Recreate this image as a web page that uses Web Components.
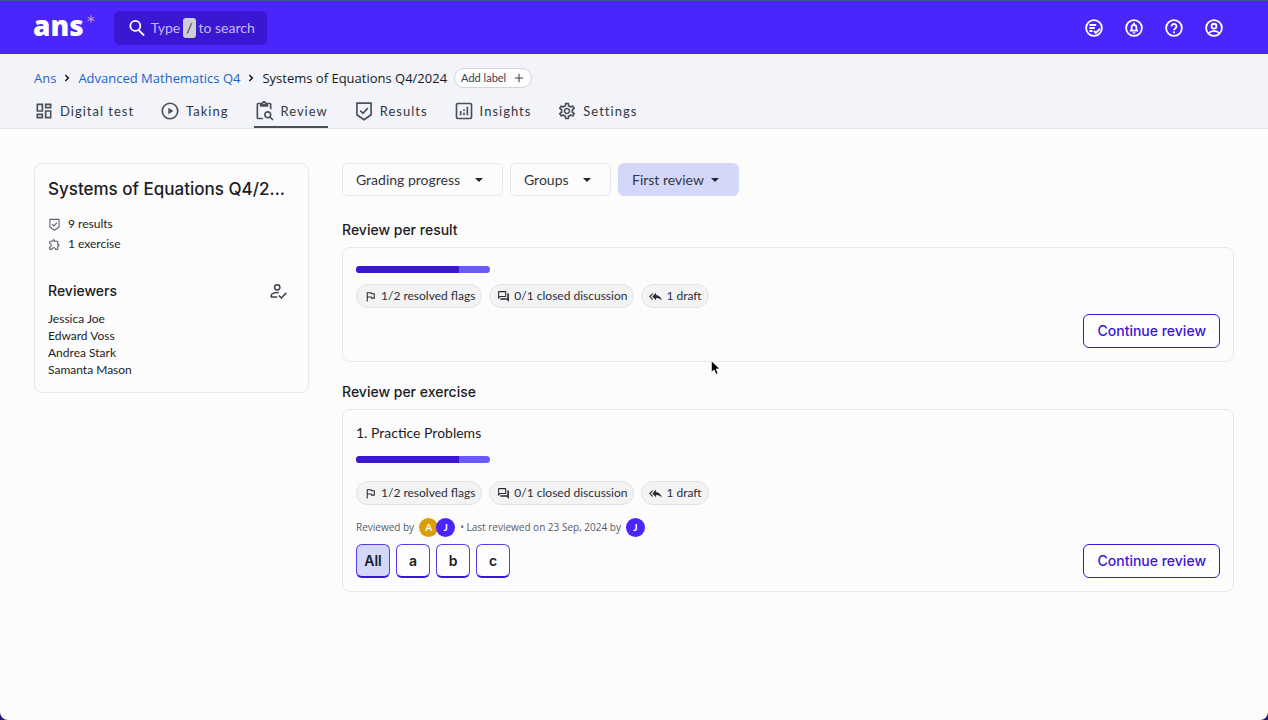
<!DOCTYPE html>
<html lang="en">
<head>
<meta charset="utf-8">
<meta name="viewport" content="width=device-width, initial-scale=1">
<title>Systems of Equations Q4/2024</title>
<style>
  :root {
    --text-font: Lato, "Open Sans", sans-serif;
    --wide-font: "Open Sans", Lato, sans-serif;
    --head-font: Inter, "Open Sans", sans-serif;
    --brand: #4a26fd;
    --brand-dark: #3b17d4;
    --tint: #d3d8fb;
    --line: #e7e7ea;
    --ink: #1b1d24;
    --soft: #3c4049;
  }
  html { background: #26127a; }
  body {
    margin: 0;
    font: 12px/20px var(--text-font);
    color: var(--ink);
  }
</style>
</head>
<body>
<ans-app></ans-app>

<script>
const ICONS = {
  search: '<path fill="none" stroke="currentColor" stroke-width="2.2" d="M14 14.500L20.500 21M16 9.500a6 6 0 1 1-12 0 6 6 0 0 1 12 0z"/>',
  star: '<path fill="none" stroke="currentColor" stroke-width="3" d="M12 1v22M2 7l20 10M22 7L2 17"/>',
  todo: '<g fill="none" stroke="currentColor" stroke-width="2.400"><circle cx="12" cy="12" r="10.5"/><path d="M6 8h9M6 12h7M6 16h4M12 16l2.500 2.500 5.500-5.500"/></g>',
  bell: '<g fill="none" stroke="currentColor" stroke-width="2.400"><circle cx="12" cy="12" r="10.5"/><path d="M6.500 15.500h11M8.800 15.500V11a3.2 3.2 0 0 1 6.4 0v4.500M12 5v3"/></g><path d="M10 17.500h4a2 2 0 0 1-4 0z"/>',
  help: '<g fill="none" stroke="currentColor" stroke-width="2.400"><circle cx="12" cy="12" r="10.5"/><path d="M8.800 9.800a3.200 3.200 0 1 1 5.200 2.400c-1.300 1-2 1.500-2 2.800"/></g><path d="M10.800 16.500h2.400v2.400h-2.400z"/>',
  user: '<g fill="none" stroke="currentColor" stroke-width="2.400"><circle cx="12" cy="12" r="10.5"/><circle cx="12" cy="9.500" r="3.200"/><path d="M4.800 19a10 10 0 0 1 14.400 0"/></g>',
  chevron: '<path fill="none" stroke="currentColor" stroke-width="4.500" d="M7 3l9 9-9 9"/>',
  plus: '<path fill="none" stroke="currentColor" stroke-width="2.500" d="M12 2v20M2 12h20"/>',
  grid: '<path d="M19 5v2h-4V5h4M9 5v6H5V5h4m10 8v6h-4v-6h4M9 17v2H5v-2h4M21 3h-8v6h8V3zM11 3H3v10h8V3zm10 8h-8v10h8V11zm-10 4H3v6h8v-6z"/>',
  play: '<path d="M10 16l6-4-6-4v8z"/><circle cx="12" cy="12" r="9.300" fill="none" stroke="currentColor" stroke-width="2"/>',
  paste: '<path fill-rule="evenodd" d="M20.3 18.900c.4-.7.7-1.500.7-2.400 0-2.500-2-4.500-4.500-4.500S12 14 12 16.500s2 4.500 4.500 4.500c.9 0 1.700-.3 2.400-.7l3.200 3.200 1.400-1.400-3.200-3.200zm-3.800.1c-1.400 0-2.500-1.100-2.500-2.500s1.100-2.500 2.500-2.500 2.500 1.100 2.500 2.500-1.100 2.500-2.500 2.500zM5 20V4h2v3h10V4h2v5.200c.7.4 1.400.8 2 1.300V4c0-1.100-.9-2-2-2h-4.180C14.400.84 13.300 0 12 0S9.600.84 9.180 2H5c-1.100 0-2 .9-2 2v16c0 1.100.9 2 2 2h6.500c-.6-.6-1.100-1.300-1.300-2H5zM12 2a1 1 0 1 1 0 2 1 1 0 0 1 0-2z"/>',
  shield: '<g fill="none" stroke="currentColor" stroke-width="2"><path stroke-linejoin="round" d="M3.500 2.500h17v14L12 22.500l-8.500-6z"/><path d="M7.500 11.500l3.200 3.200 6-6.200"/></g>',
  chart: '<g fill="none" stroke="currentColor" stroke-width="2"><rect x="3" y="3" width="18" height="18" rx="1.500"/><path d="M8 17v-5M12 17v-3M12 12v-2M16 17V7"/></g>',
  gear: '<path d="M19.430 12.980c.04-.32.07-.64.07-.98 0-.34-.03-.66-.07-.98l2.110-1.650c.19-.15.24-.42.12-.64l-2-3.460c-.09-.16-.26-.25-.44-.25-.06 0-.12.01-.17.03l-2.490 1c-.52-.4-1.080-.73-1.690-.98l-.38-2.650C14.460 2.180 14.250 2 14 2h-4c-.25 0-.46.18-.49.42l-.38 2.650c-.61.25-1.170.59-1.690.98l-2.490-1c-.06-.02-.12-.03-.18-.03-.17 0-.34.09-.43.25l-2 3.460c-.13.22-.07.49.12.64l2.110 1.650c-.04.32-.07.65-.07.98 0 .33.03.66.07.98l-2.110 1.650c-.19.15-.24.42-.12.64l2 3.460c.09.16.26.25.44.25.06 0 .12-.01.17-.03l2.490-1c.52.4 1.080.73 1.690.98l.38 2.650c.03.24.24.42.49.42h4c.25 0 .46-.18.49-.42l.38-2.650c.61-.25 1.170-.59 1.690-.98l2.490 1c.06.02.12.03.18.03.17 0 .34-.09.43-.25l2-3.460c.12-.22.07-.49-.12-.64l-2.110-1.650zm-1.980-1.710c.04.31.05.52.05.73 0 .21-.02.43-.05.73l-.14 1.130.89.7 1.080.84-.7 1.210-1.270-.51-1.040-.42-.9.68c-.43.32-.84.56-1.250.73l-1.060.43-.16 1.130-.2 1.350h-1.400l-.19-1.350-.16-1.130-1.060-.43c-.43-.18-.83-.41-1.230-.71l-.91-.7-1.060.43-1.270.51-.7-1.210 1.080-.84.89-.7-.14-1.130c-.03-.31-.05-.54-.05-.74s.02-.43.05-.73l.14-1.130-.89-.7-1.080-.84.7-1.210 1.270.51 1.040.42.9-.68c.43-.32.84-.56 1.250-.73l1.060-.43.16-1.130.2-1.350h1.390l.19 1.350.16 1.130 1.060.43c.43.18.83.41 1.230.71l.91.7 1.060-.43 1.270-.51.7 1.210-1.070.85-.89.7.14 1.130zM12 8c-2.210 0-4 1.790-4 4s1.790 4 4 4 4-1.790 4-4-1.790-4-4-4zm0 6c-1.100 0-2-.9-2-2s.9-2 2-2 2 .9 2 2-.9 2-2 2z"/>',
  puzzle: '<path d="M10.500 4.500c.28 0 .5.22.5.5v2h6v6h2c.28 0 .5.22.5.5s-.22.5-.5.5h-2v6h-2.120c-.68-1.750-2.390-3-4.380-3s-3.700 1.250-4.380 3H4v-2.120c1.750-.68 3-2.390 3-4.380 0-1.990-1.240-3.700-2.990-4.380L4 7h6V5c0-.28.22-.5.5-.5m0-2C9.120 2.500 8 3.620 8 5H4c-1.100 0-1.990.9-1.990 2v3.800h.29c1.490 0 2.700 1.210 2.700 2.700s-1.210 2.700-2.700 2.700H2V20c0 1.100.9 2 2 2h3.800v-.3c0-1.490 1.210-2.700 2.700-2.700s2.700 1.210 2.700 2.700v.3H17c1.100 0 2-.9 2-2v-4c1.380 0 2.500-1.120 2.500-2.500S20.380 11 19 11V7c0-1.100-.9-2-2-2h-4c0-1.380-1.120-2.500-2.500-2.500z"/>',
  assign: '<g fill="none" stroke="currentColor" stroke-width="2"><circle cx="11" cy="7" r="3.500"/><path d="M13 14.200c-5-.9-10 1.300-10 3.800v2h8M13 18l3.500 3.200 6.500-6.700"/></g>',
  flag: '<path d="M12.360 6l.4 2H18v6h-3.360l-.4-2H7V6h5.360M14 4H5v17h2v-7h5.600l.4 2h7V6h-5.600L14 4z"/>',
  forum: '<path d="M15 4v7H5.170L4 12.170V4h11m1-2H3c-.55 0-1 .45-1 1v14l4-4h10c.55 0 1-.45 1-1V3c0-.55-.45-1-1-1zm5 4h-2v9H6v2c0 .55.45 1 1 1h11l4 4V7c0-.55-.45-1-1-1z"/>',
  reply: '<path d="M7 8V5l-7 7 7 7v-3l-4-4 4-4zm6 1V5l-7 7 7 7v-4.100c5 0 8.500 1.600 11 5.100-1-5-4-10-11-11z"/>',
  caret: '<path d="M0 6h24L12 18z"/>',
  pointer: '<path fill="#000" stroke="#fff" stroke-width="1.500" d="M2 1v19l4.500-4 3 7 3.500-1.500-3-7h6z"/>'
};

function define(name, html, setup) {
  const template = document.createElement('template');
  template.innerHTML = html;
  customElements.define(name, class extends HTMLElement {
    connectedCallback() {
      if (this.shadowRoot) return;
      const content = template.content.cloneNode(true);
      if (setup) setup(this, content);
      this.attachShadow({ mode: 'open' }).append(content);
    }
  });
}

define('ans-icon', `
  <style>
    :host { display: block; width: 20px; height: 20px; flex: none; }
    svg { display: block; width: 100%; height: 100%; overflow: visible; }
  </style>
  <svg viewBox="0 0 24 24" fill="currentColor" aria-hidden="true"></svg>`,
  (el, root) => { root.querySelector('svg').innerHTML = ICONS[el.getAttribute('name')]; });

define('ans-topbar', `
  <style>
    :host { display: flex; align-items: center; box-sizing: border-box; height: 54px;
      padding: 0 45px 0 33px; background: var(--brand); border-top: 1px solid #3b5a9c; color: #fff; }
    .logo { display: flex; align-items: flex-start; gap: 3px; color: #fff; text-decoration: none;
      font: 800 28px/32px "Open Sans", sans-serif; padding-bottom: 6px; }
    .logo .star { width: 8px; height: 8px; margin-top: 6px; color: #d3a0b4; }
    .search { display: flex; align-items: center; height: 34px; margin-left: 19px; padding: 0 12px 0 13px;
      border: 0; border-radius: 6px; background: var(--brand-dark); color: #c3b9f3;
      font: 14px/20px var(--text-font); }
    .search .glass { width: 20px; height: 20px; margin-right: 4px; color: #fff; }
    kbd { font: 14px/20px var(--text-font); background: #cfcfd6; color: #333; border-radius: 3px;
      padding: 0 3px; margin: 0 3px; }
    nav { display: flex; gap: 22px; margin-left: auto; }
    nav button { display: block; padding: 0; border: 0; background: none; color: inherit; }
    nav ans-icon { width: 18px; height: 18px; }
  </style>
  <a class="logo" href="#">ans<ans-icon class="star" name="star"></ans-icon></a>
  <button class="search"><ans-icon class="glass" name="search"></ans-icon>Type<kbd>/</kbd>to search</button>
  <nav>
    <button aria-label="Tasks"><ans-icon name="todo"></ans-icon></button>
    <button aria-label="Notifications"><ans-icon name="bell"></ans-icon></button>
    <button aria-label="Help"><ans-icon name="help"></ans-icon></button>
    <button aria-label="Account"><ans-icon name="user"></ans-icon></button>
  </nav>`);

define('ans-breadcrumb', `
  <style>
    :host { display: flex; align-items: center; gap: 7px; font: 13px/20px var(--wide-font); color: #16181d; }
    a { color: #1b62c9; text-decoration: none; }
    .sep { width: 8px; height: 8px; }
    .here { font-weight: 500; }
    button { display: flex; align-items: center; gap: 8px; height: 20px; box-sizing: border-box;
      padding: 0 7px 0 6px; border: 1px solid #d3d4d9; border-radius: 10px; background: #fdfdfd;
      font: 11px/16px var(--text-font); color: var(--soft); }
    button ans-icon { width: 10px; height: 10px; }
  </style>
  <a href="#">Ans</a><ans-icon class="sep" name="chevron"></ans-icon>
  <a href="#">Advanced Mathematics Q4</a><ans-icon class="sep" name="chevron"></ans-icon>
  <span class="here">Systems of Equations Q4/2024</span>
  <button>Add label<ans-icon name="plus"></ans-icon></button>`);

define('ans-tab', `
  <style>
    :host { display: block; }
    a { display: flex; align-items: center; gap: 6px; box-sizing: border-box; height: 35px; padding-top: 2px;
      color: #33363e; text-decoration: none; font-size: 13px; letter-spacing: 1px;
      border-bottom: 2px solid transparent; }
    :host([current]) a { border-color: #4b4f58; }
    ans-icon { color: #4b4f58; }
  </style>
  <a href="#"><ans-icon></ans-icon><slot></slot></a>`,
  (el, root) => {
    root.querySelector('ans-icon').setAttribute('name', el.getAttribute('icon'));
    if (el.hasAttribute('current')) root.querySelector('a').setAttribute('aria-current', 'page');
  });

define('ans-subheader', `
  <style>
    :host { display: block; padding: 14px 34px 0; background: #f2f4f9; border-bottom: 1px solid #e3e4e9; }
    nav { display: flex; gap: 26px; margin-top: 5px; }
  </style>
  <ans-breadcrumb></ans-breadcrumb>
  <nav>
    <ans-tab icon="grid">Digital test</ans-tab>
    <ans-tab icon="play">Taking</ans-tab>
    <ans-tab icon="paste" current>Review</ans-tab>
    <ans-tab icon="shield">Results</ans-tab>
    <ans-tab icon="chart">Insights</ans-tab>
    <ans-tab icon="gear">Settings</ans-tab>
  </nav>`);

define('ans-summary', `
  <style>
    :host { display: block; box-sizing: border-box; padding: 14px 13px; border: 1px solid var(--line);
      border-radius: 8px; }
    h1 { margin: 0; font: 500 17px/22px var(--head-font); white-space: nowrap; }
    .facts { margin: 14px 0 26px; padding: 0; list-style: none; }
    .facts li { display: flex; align-items: center; gap: 7px; line-height: 20px; }
    .facts ans-icon { width: 13px; height: 13px; color: #5d6370; }
    .head { display: flex; align-items: center; justify-content: space-between; padding-right: 8px; }
    h2 { margin: 0; font: 500 14px/22px var(--head-font); }
    button { display: block; padding: 0; border: 0; background: none; color: var(--soft); }
    button ans-icon { width: 18px; height: 18px; }
    .people { margin: 8px 0 0; padding: 0; list-style: none; font-size: 12px; line-height: 17px; }
  </style>
  <h1>Systems of Equations Q4/2…</h1>
  <ul class="facts">
    <li><ans-icon name="shield"></ans-icon>9 results</li>
    <li><ans-icon name="puzzle"></ans-icon>1 exercise</li>
  </ul>
  <div class="head"><h2>Reviewers</h2><button aria-label="Assign reviewers"><ans-icon name="assign"></ans-icon></button></div>
  <ul class="people"><li>Jessica Joe</li><li>Edward Voss</li><li>Andrea Stark</li><li>Samanta Mason</li></ul>`);

define('ans-filter', `
  <style>
    :host { display: grid; align-items: center; }
    select, ans-icon { grid-area: 1 / 1; }
    select { appearance: none; height: 33px; padding: 0 41px 0 13px; border: 1px solid var(--line);
      border-radius: 6px; background: #fcfcfd; color: #33363e; font: 14px/20px var(--text-font); }
    :host([active]) select { background: var(--tint); border-color: var(--tint); padding-right: 34px; }
    ans-icon { width: 8px; height: 8px; justify-self: end; margin-right: 20px; pointer-events: none; color: #24272e; }
  </style>
  <select><option></option></select>
  <ans-icon name="caret"></ans-icon>`,
  (el, root) => {
    root.querySelector('option').textContent = el.getAttribute('label');
    root.querySelector('select').setAttribute('aria-label', el.getAttribute('label'));
  });

define('ans-progress', `
  <style>
    :host { display: flex; width: 134px; height: 7px; border-radius: 4px; overflow: hidden; background: #6a5bff; }
    span { width: 77%; background: var(--brand-dark); }
  </style>
  <span></span>`);

define('ans-chip', `
  <style>
    :host { display: flex; align-items: center; gap: 4px; box-sizing: border-box; height: 24px; padding: 0 6px 0 7px;
      border: 1px solid #e3e3e6; border-radius: 12px; background: #f3f3f4; color: #2b2e36;
      font-size: 12px; line-height: 18px; white-space: nowrap; }
    ans-icon { width: 13px; height: 13px; }
  </style>
  <ans-icon></ans-icon><slot></slot>`,
  (el, root) => root.querySelector('ans-icon').setAttribute('name', el.getAttribute('icon')));

define('ans-chips', `
  <style>:host { display: flex; flex-wrap: wrap; gap: 7px; }</style>
  <ans-chip icon="flag">1/2 resolved flags</ans-chip>
  <ans-chip icon="forum">0/1 closed discussion</ans-chip>
  <ans-chip icon="reply">1 draft</ans-chip>`);

define('ans-button', `
  <style>
    :host { display: block; margin-left: auto; }
    button { display: block; box-sizing: border-box; height: 34px; padding: 0 13px; border: 1px solid var(--brand-dark);
      border-radius: 6px; background: #fdfdfe; color: var(--brand-dark); font: 500 14px/20px var(--head-font); }
  </style>
  <button><slot></slot></button>`);

define('ans-part', `
  <style>
    :host { display: block; }
    button { display: block; box-sizing: border-box; width: 34px; height: 34px; padding: 0;
      border: 1px solid #5a3cdf; border-bottom: 2px solid var(--brand-dark); border-radius: 6px;
      background: #fdfdfe; color: var(--ink); font: 600 14px/20px var(--head-font); }
    :host([selected]) button { background: var(--tint); }
  </style>
  <button><slot></slot></button>`);

define('ans-avatar', `
  <style>
    :host { display: block; width: 19px; height: 19px; border-radius: 50%; background: var(--brand);
      color: #fff; font: 700 10px/19px var(--text-font); text-align: center; }
    :host([gold]) { background: #d99e08; }
  </style>
  <slot></slot>`);

define('ans-section', `
  <style>
    :host { display: block; }
    h2 { margin: 0 0 6px; font: 500 14px/22px var(--head-font); }
    .card { display: flex; flex-direction: column; padding: 13px; border: 1px solid var(--line); border-radius: 8px; }
  </style>
  <h2></h2>
  <div class="card"><slot></slot></div>`,
  (el, root) => { root.querySelector('h2').textContent = el.getAttribute('heading'); });

define('ans-app', `
  <style>
    :host { display: flex; flex-direction: column; min-height: 100vh; background: #fcfcfd;
      border-radius: 0 0 8px 8px; overflow: hidden; }
    main { display: grid; grid-template-columns: 275px minmax(0, 1fr); gap: 33px; align-items: start;
      padding: 34px 34px 40px; }
    .filters { display: flex; gap: 7px; margin-bottom: 23px; }
    .bar1 { margin: 5px 0 11px; }
    .bar2 { margin: 13px 0 18px; }
    .end { display: flex; margin-top: 6px; }
    .title { font-size: 14px; line-height: 20px; }
    .meta { display: flex; align-items: center; gap: 5px; margin: 13px 0 7px;
      font: 10px/19px var(--wide-font); color: #565b67; }
    .pair { display: flex; }
    .pair ans-avatar + ans-avatar { margin-left: -2px; }
    .parts { display: flex; align-items: center; gap: 6px; }
    .second { margin-top: 19px; }
    .pointer { position: absolute; left: 710px; top: 360px; width: 15px; height: 15px; pointer-events: none; }
  </style>
  <ans-topbar></ans-topbar>
  <ans-subheader></ans-subheader>
  <main>
    <ans-summary></ans-summary>
    <div>
      <div class="filters">
        <ans-filter label="Grading progress"></ans-filter>
        <ans-filter label="Groups"></ans-filter>
        <ans-filter label="First review" active></ans-filter>
      </div>
      <ans-section heading="Review per result">
        <ans-progress class="bar1"></ans-progress>
        <ans-chips></ans-chips>
        <div class="end"><ans-button>Continue review</ans-button></div>
      </ans-section>
      <ans-section class="second" heading="Review per exercise">
        <div class="title">1. Practice Problems</div>
        <ans-progress class="bar2"></ans-progress>
        <ans-chips></ans-chips>
        <div class="meta"><span>Reviewed by</span>
          <span class="pair"><ans-avatar gold>A</ans-avatar><ans-avatar>J</ans-avatar></span>
          <span>• Last reviewed on 23 Sep, 2024 by</span><ans-avatar>J</ans-avatar></div>
        <div class="parts">
          <ans-part selected>All</ans-part><ans-part>a</ans-part><ans-part>b</ans-part><ans-part>c</ans-part>
          <ans-button>Continue review</ans-button>
        </div>
      </ans-section>
    </div>
  </main>
  <ans-icon class="pointer" name="pointer"></ans-icon>`);
</script>
</body>
</html>
